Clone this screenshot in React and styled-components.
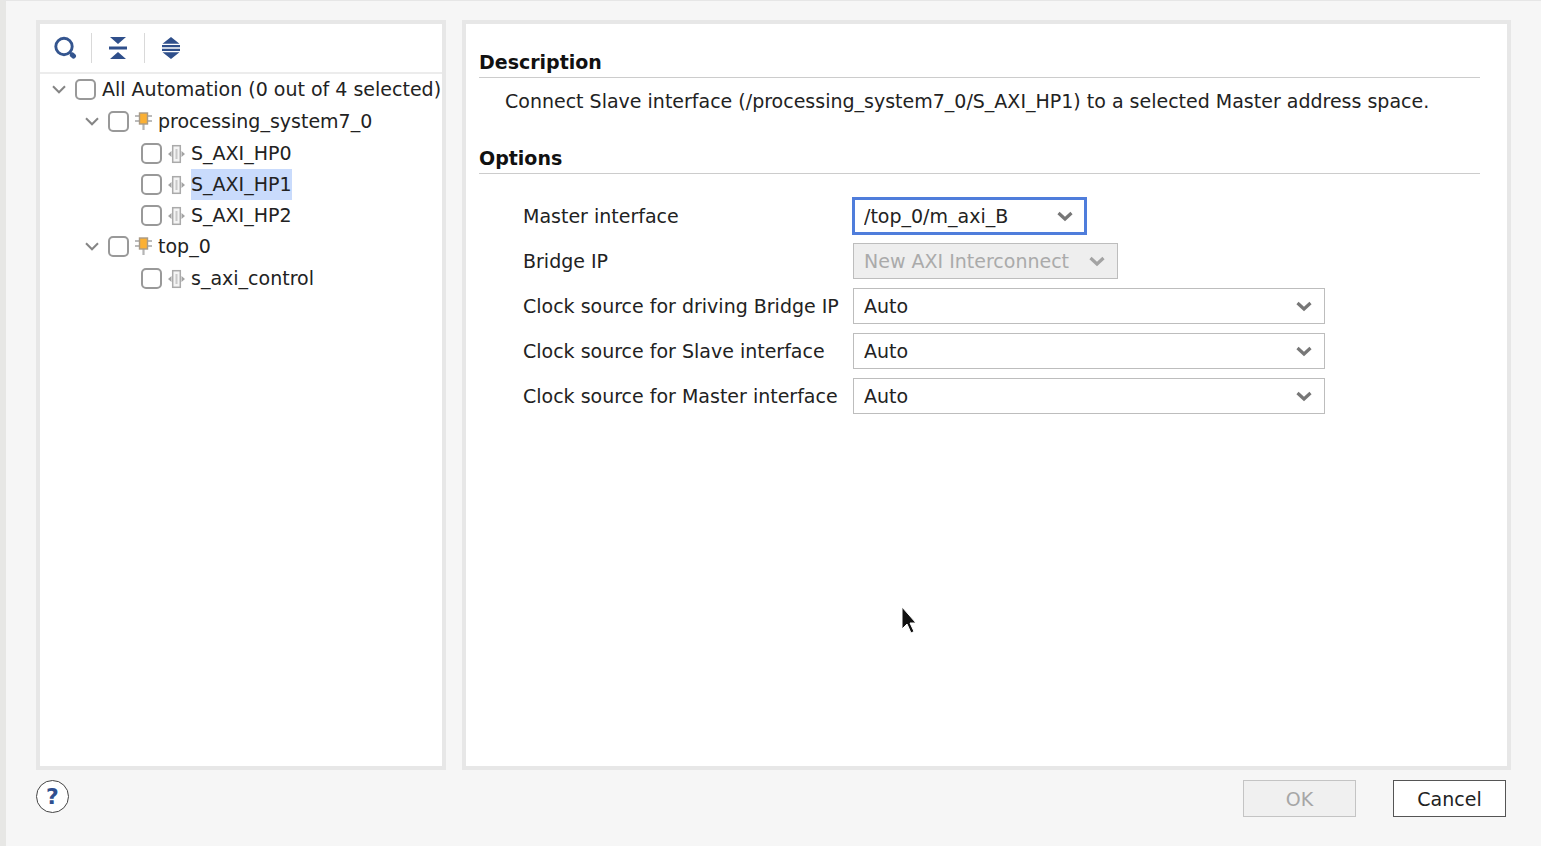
import React, { useState } from "react";
import styled, { createGlobalStyle, css } from "styled-components";

const GlobalStyle = createGlobalStyle`
  *, *::before, *::after { box-sizing: border-box; }
  body {
    margin: 0;
    background: #f6f6f6;
    color: #222;
    font-family: "DejaVu Sans", Verdana, sans-serif;
    font-size: 19px;
    line-height: 24px;
  }
  button, select, input { font: inherit; color: inherit; }
`;

const Dialog = styled.main`
  display: flex;
  flex-direction: column;
  min-height: 100vh;
  padding: 19px 30px 29px 30px;
  border-left: 6px solid #e7e7e5;
  border-top: 1px solid #e6e6e6;
`;

const Panels = styled.div`
  flex: 1;
  display: grid;
  grid-template-columns: 410px minmax(0, 1fr);
  gap: 16px;
`;

const Panel = styled.section`
  background: #fff;
  border: 4px solid #e7e7e7;
`;

const Toolbar = styled.div`
  display: flex;
  align-items: center;
  height: 50px;
  padding-left: 12px;
  border-bottom: 2px solid #ececec;
`;

const ToolButton = styled.button`
  display: grid;
  place-items: center;
  width: 26px;
  height: 30px;
  padding: 0;
  border: 0;
  background: none;
`;

const Divider = styled.span`
  width: 1px;
  height: 30px;
  margin: 0 13px;
  background: #d9d9d9;
`;

const TreeList = styled.ul`
  list-style: none;
  margin: 0;
  padding: 0;
`;

const Branch = styled(TreeList)`
  margin-top: 1px;
  padding-left: 33px;
`;

const TreeRow = styled.div`
  display: flex;
  align-items: center;
  gap: 6px;
  height: 31px;
  padding-left: 12px;
  & > * { flex: none; }
`;

const Toggle = styled.button`
  display: grid;
  place-items: center start;
  width: 17px;
  height: 20px;
  padding: 0;
  border: 0;
  background: none;
`;

const ToggleSpace = styled.span`
  width: 17px;
`;

const Checkbox = styled.input.attrs({ type: "checkbox" })`
  appearance: none;
  width: 21px;
  height: 21px;
  margin: 0;
  border: 2px solid #999;
  border-radius: 5px;
  background: #fff;
  &:checked { background: #34558b; }
`;

const NodeLabel = styled.label`
  height: 31px;
  line-height: 31px;
  white-space: nowrap;
  background: ${(p) => (p.$selected ? "#c9dbfc" : "transparent")};
`;

const Details = styled(Panel)`
  padding: 24px 27px 24px 13px;
`;

const Heading = styled.h2`
  margin: 0;
  padding-bottom: 4px;
  height: 30px;
  border-bottom: 1px solid #ccc;
  font-size: 19px;
  line-height: 28px;
  font-weight: 700;
  color: #111;
`;

const Summary = styled.p`
  margin: 11px 0 31px;
  padding-left: 26px;
`;

const Options = styled.div`
  display: grid;
  gap: 9px;
  padding: 24px 0 0 44px;
`;

const OptionRow = styled.div`
  display: grid;
  grid-template-columns: 330px minmax(0, 1fr);
  align-items: center;
`;

const SelectFrame = styled.div`
  display: grid;
  align-items: center;
  width: ${(p) => p.$width}px;
  max-width: 100%;
  & > * { grid-area: 1 / 1; }
  & > svg {
    justify-self: end;
    margin-right: 13px;
    pointer-events: none;
  }
`;

const Select = styled.select`
  appearance: none;
  width: 100%;
  height: 36px;
  padding: 0 36px 0 10px;
  border: 1px solid #bdbdbd;
  border-radius: 0;
  background: #fff;
  outline: 0;
  ${(p) =>
    p.$active &&
    css`
      border-color: #4f7ddb;
      box-shadow: 0 0 0 1px #4f7ddb, inset 0 0 0 1px #4f7ddb;
    `}
  &:disabled {
    background: #eee;
    color: #aaa;
    opacity: 1;
  }
`;

const Footer = styled.footer`
  display: flex;
  align-items: flex-start;
  gap: 37px;
  margin-top: 10px;
  padding-right: 5px;
`;

const HelpButton = styled.button`
  width: 33px;
  height: 33px;
  margin-right: auto;
  padding: 0;
  border: 1px solid #444;
  border-radius: 50%;
  background: #fff;
  color: #2f4f8f;
  font-weight: 700;
  font-size: 22px;
  line-height: 30px;
`;

const ActionButton = styled.button`
  width: 113px;
  height: 37px;
  padding: 0;
  border: 1px solid #555;
  background: #fff;
  &:disabled {
    border-color: #c4c4c4;
    background: #f0f0f0;
    color: #a6a6a6;
  }
`;

const Pointer = styled.svg`
  position: absolute;
  left: 901px;
  top: 605px;
  pointer-events: none;
`;

const SearchIcon = () => (
  <svg width="24" height="24" viewBox="0 0 24 24" fill="none" stroke="#34558f">
    <circle cx="11" cy="10.500" r="8.200" strokeWidth="2.900" />
    <path d="M16.500 16l2 2" strokeWidth="2.400" />
    <path d="M19.300 18.900l1.200 1.200" strokeWidth="5" strokeLinecap="round" />
  </svg>
);

const CollapseIcon = () => (
  <svg width="18" height="22" viewBox="0 0 18 22" fill="#2f4f8b">
    <path d="M1 0h16L9 7zM0 9.500h18v3H0zM1 22h16L9 15z" />
  </svg>
);

const ExpandIcon = () => (
  <svg width="18" height="22" viewBox="0 0 18 22" fill="#2f4f8b">
    <path d="M9 0l8.500 6.700H.5zM0 8h18v2.200H0zM0 11.800h18V14H0zM.5 15.300h17L9 22z" />
  </svg>
);

const TreeChevron = () => (
  <svg width="14" height="9" viewBox="0 0 14 9" fill="none" stroke="#858585" strokeWidth="2">
    <path d="M1 1.300l6 6 6-6" />
  </svg>
);

const SelectChevron = ({ muted }) => (
  <svg width="16" height="11" viewBox="0 0 16 11" fill="none" stroke={muted ? "#a3a3a3" : "#777"} strokeWidth="3.200">
    <path d="M1.500 2L8 8l6.500-6" />
  </svg>
);

const ChipIcon = () => (
  <svg width="17" height="19" viewBox="0 0 17 19">
    <path d="M0 4h17M0 9h17" stroke="#a5a5a5" strokeWidth="1.500" />
    <path d="M8.500 12v6" stroke="#b5b5b5" strokeWidth="2.200" />
    <rect x="4.500" y="1" width="8" height="11" fill="#fbb034" stroke="#a99a85" strokeWidth="1.400" />
  </svg>
);

const PortIcon = () => (
  <svg width="17" height="20" viewBox="0 0 17 20">
    <path d="M0 10l3.500-3v6zM17 10l-3.500-3v6z" fill="#a3a3a3" />
    <rect x="4.700" y="1.700" width="7.600" height="16.600" fill="#f4f4f4" stroke="#aaa" strokeWidth="1.500" />
    <path d="M8.500 5v10" stroke="#c9c9c9" strokeWidth="2" />
  </svg>
);

const automation = {
  id: "all",
  name: "All Automation (0 out of 4 selected)",
  children: [
    {
      id: "processing_system7_0",
      name: "processing_system7_0",
      icon: ChipIcon,
      children: [
        { id: "hp0", name: "S_AXI_HP0", icon: PortIcon },
        { id: "hp1", name: "S_AXI_HP1", icon: PortIcon, selected: true },
        { id: "hp2", name: "S_AXI_HP2", icon: PortIcon },
      ],
    },
    {
      id: "top_0",
      name: "top_0",
      icon: ChipIcon,
      children: [{ id: "control", name: "s_axi_control", icon: PortIcon }],
    },
  ],
};

const options = [
  { id: "master", label: "Master interface", value: "/top_0/m_axi_B", width: 233, active: true },
  { id: "bridge", label: "Bridge IP", value: "New AXI Interconnect", width: 265, disabled: true },
  { id: "clk-bridge", label: "Clock source for driving Bridge IP", value: "Auto", width: 472 },
  { id: "clk-slave", label: "Clock source for Slave interface", value: "Auto", width: 472 },
  { id: "clk-master", label: "Clock source for Master interface", value: "Auto", width: 472 },
];

function TreeNode({ node }) {
  const [open, setOpen] = useState(true);
  const Icon = node.icon;
  return (
    <li>
      <TreeRow>
        {node.children ? (
          <Toggle aria-label={`Toggle ${node.name}`} aria-expanded={open} onClick={() => setOpen(!open)}>
            <TreeChevron />
          </Toggle>
        ) : (
          <ToggleSpace />
        )}
        <Checkbox id={node.id} />
        {Icon && <Icon />}
        <NodeLabel htmlFor={node.id} $selected={node.selected}>
          {node.name}
        </NodeLabel>
      </TreeRow>
      {node.children && open && (
        <Branch>
          {node.children.map((child) => (
            <TreeNode key={child.id} node={child} />
          ))}
        </Branch>
      )}
    </li>
  );
}

export default function App() {
  return (
    <>
      <GlobalStyle />
      <Dialog>
        <Panels>
          <Panel>
            <Toolbar>
              <ToolButton aria-label="Search"><SearchIcon /></ToolButton>
              <Divider />
              <ToolButton aria-label="Collapse all"><CollapseIcon /></ToolButton>
              <Divider />
              <ToolButton aria-label="Expand all"><ExpandIcon /></ToolButton>
            </Toolbar>
            <TreeList>
              <TreeNode node={automation} />
            </TreeList>
          </Panel>
          <Details>
            <Heading>Description</Heading>
            <Summary>
              Connect Slave interface (/processing_system7_0/S_AXI_HP1) to a selected Master address space.
            </Summary>
            <Heading>Options</Heading>
            <Options>
              {options.map((o) => (
                <OptionRow key={o.id}>
                  <label htmlFor={o.id}>{o.label}</label>
                  <SelectFrame $width={o.width}>
                    <Select id={o.id} disabled={o.disabled} $active={o.active}>
                      <option>{o.value}</option>
                    </Select>
                    <SelectChevron muted={o.disabled} />
                  </SelectFrame>
                </OptionRow>
              ))}
            </Options>
          </Details>
        </Panels>
        <Footer>
          <HelpButton aria-label="Help">?</HelpButton>
          <ActionButton disabled>OK</ActionButton>
          <ActionButton>Cancel</ActionButton>
        </Footer>
      </Dialog>
      <Pointer width="16" height="30" viewBox="0 0 16 30" aria-hidden="true">
        <path d="M1 2v22l5-5 4 9 3-1.500-4-8.500h6z" fill="#111" stroke="#fff" strokeWidth="1" />
      </Pointer>
    </>
  );
}
